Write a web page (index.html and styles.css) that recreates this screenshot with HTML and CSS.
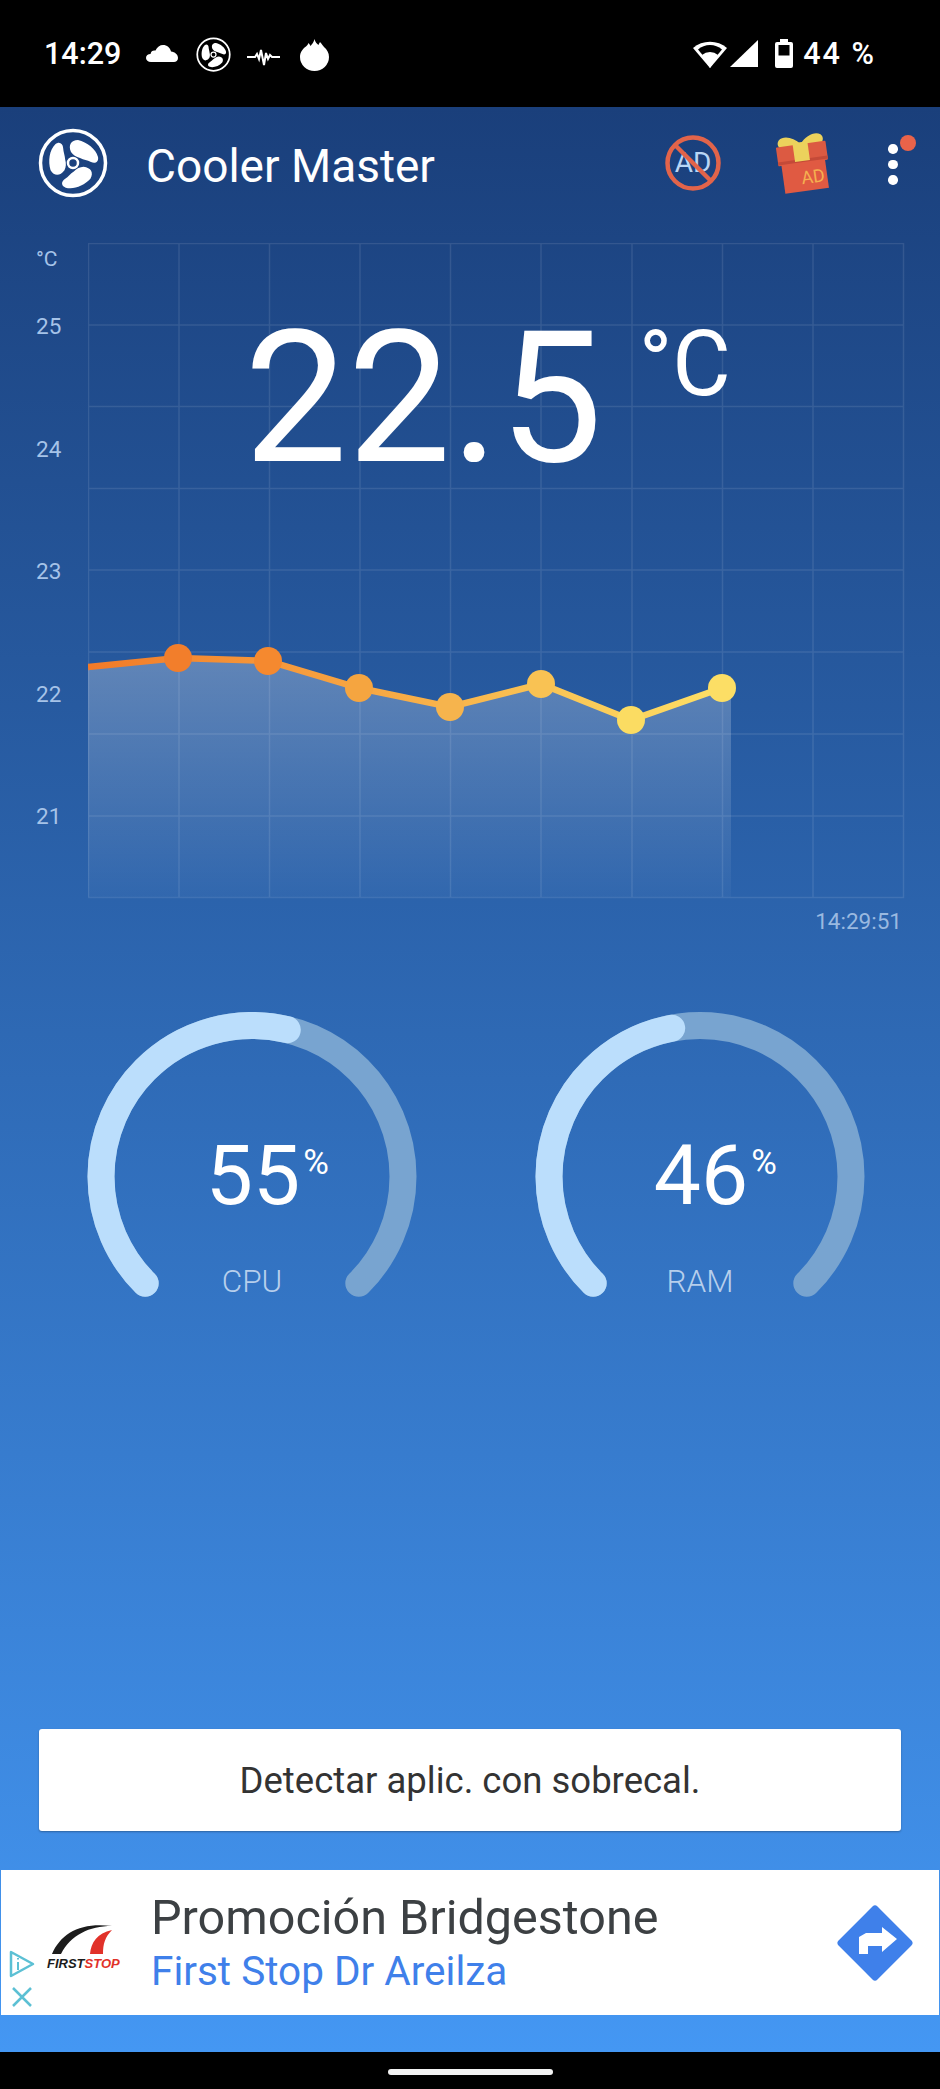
FILE: index.html
```html
<!DOCTYPE html>
<html lang="es">
<head>
  <meta charset="UTF-8" />
  <meta name="viewport" content="width=device-width, initial-scale=1" />
  <title>Cooler Master</title>
  <link rel="stylesheet" href="styles.css">
</head>
<body>
  <svg class="defs" width="0" height="0">
    <symbol id="fan" viewBox="-35 -35 70 70">
      <circle cx="0" cy="0" r="32.5" fill="none" stroke="currentColor" stroke-width="3.5"/>
      <circle cx="0" cy="0" r="5" fill="none" stroke="currentColor" stroke-width="2.5"/>
      <g fill="currentColor">
        <path d="M-2 -11C-5 -18 -2 -23 5 -23C14 -21 23 -14 25 -6C26 -1 22 1 18 -1C14 -3 11 -3 7 -5C3 -6 0 -8 -2 -11Z"/>
        <path transform="rotate(120)" d="M-2 -11C-5 -18 -2 -23 5 -23C14 -21 23 -14 25 -6C26 -1 22 1 18 -1C14 -3 11 -3 7 -5C3 -6 0 -8 -2 -11Z"/>
        <path transform="rotate(240)" d="M-2 -11C-5 -18 -2 -23 5 -23C14 -21 23 -14 25 -6C26 -1 22 1 18 -1C14 -3 11 -3 7 -5C3 -6 0 -8 -2 -11Z"/>
      </g>
    </symbol>
    <linearGradient id="lineGrad" gradientUnits="userSpaceOnUse" x1="0" y1="0" x2="634" y2="0">
      <stop offset="0" stop-color="#f27a28"/>
      <stop offset="1" stop-color="#fde066"/>
    </linearGradient>
    <linearGradient id="areaGrad" x1="0" y1="0" x2="0" y2="1">
      <stop offset="0" stop-color="#fff" stop-opacity="0.27"/>
      <stop offset="1" stop-color="#fff" stop-opacity="0.03"/>
    </linearGradient>
  </svg>

  <div class="screen">
    <div class="status-bar">
      <div class="status-left">
        <span class="clock">14:29</span>
        <svg class="ic-cloud" width="32" height="17" viewBox="0 0 32 17"><path d="M5 17C2 17 0 15 0 13C0 10.5 2 9 4.5 9C5 6 7 5 9.5 5.5C11 2 14 0 17 0C21 0 24 2.5 25 6.5C29 7 32 9.5 32 13C32 15.5 30 17 28 17Z" fill="#fff"/></svg>
        <svg class="ic-fan" width="35" height="35"><use href="#fan"/></svg>
        <svg class="ic-pulse" width="33" height="18" viewBox="0 0 33 18"><path d="M0 9H8L10 6L12 11L14 2L17 17L19 5L21 11L23 7L25 9H33" fill="none" stroke="#fff" stroke-width="2"/></svg>
        <svg class="ic-flame" width="29" height="32" viewBox="0 0 29 32"><path d="M14.5 0C15 3 17 5 18.5 6C19 4.5 19.5 4 20 3C22 5 23 7 24 8C27 10.5 29 14 29 18A14.5 14 0 0 1 0 18C0 13 3 9.5 6 7.5C7 6.5 8 5.5 8.5 4C9.5 5 10 6 10.5 7C12 5 14 3 14.5 0Z" fill="#fff"/></svg>
      </div>
      <div class="status-right">
        <svg class="ic-wifi" width="34" height="28" viewBox="0 0 34 28">
          <path d="M17 28L0 8A26 26 0 0 1 34 8Z" fill="#fff"/>
          <path d="M17 24L5 9.5A18 18 0 0 1 29 9.5Z" fill="#000"/>
          <path d="M17 28L9 15A12 12 0 0 1 25 15Z" fill="#fff"/>
        </svg>
        <svg class="ic-signal" width="28" height="27" viewBox="0 0 28 27"><path d="M28 0V27H0Z" fill="#fff"/></svg>
        <svg class="ic-battery" width="18" height="29" viewBox="0 0 18 29">
          <path d="M5 0H13V3H16Q18 3 18 5V27Q18 29 16 29H2Q0 29 0 27V5Q0 3 2 3H5Z" fill="#fff"/>
          <rect x="3.5" y="6" width="11" height="10.5" fill="#000"/>
        </svg>
        <span class="battery-text">44 %</span>
      </div>
    </div>

    <div class="app">
      <header class="app-header">
        <svg class="logo" width="70" height="70"><use href="#fan"/></svg>
        <h1 class="app-title">Cooler Master</h1>
        <div class="no-ad">
          <svg width="56" height="56" viewBox="0 0 56 56">
            <circle cx="28" cy="28" r="25.5" fill="none" stroke="#e2644a" stroke-width="4.5"/>
          </svg>
          <span class="no-ad-text">AD</span>
          <svg class="no-ad-slash" width="56" height="56" viewBox="0 0 56 56">
            <path d="M10 10L46 46" stroke="#e2644a" stroke-width="4.5"/>
          </svg>
        </div>
        <svg class="gift" width="58" height="66" viewBox="0 0 58 66">
          <g transform="rotate(-8 27 32)">
            <path d="M27 15C21 7 11 4 6 8C2 12 5 18 12 19H42C49 18 52 12 48 8C43 4 33 7 27 15Z" fill="#ecd25c"/>
            <rect x="2" y="15" width="50" height="19" rx="1" fill="#dc5a42"/>
            <rect x="5" y="32" width="44" height="30" fill="#e05a42"/>
            <rect x="2" y="30" width="50" height="3" fill="#c44a38"/>
            <rect x="19" y="13" width="15" height="19" fill="#ecd25c"/>
            <text class="gift-ad" x="23" y="55">AD</text>
          </g>
        </svg>
        <div class="menu">
          <span class="menu-dot"></span>
          <span class="menu-dot"></span>
          <span class="menu-dot"></span>
          <span class="menu-badge"></span>
        </div>
      </header>

      <section class="chart">
        <div class="chart-row">
          <div class="y-axis">
            <span class="y-label y-unit">°C</span>
            <span class="y-label">25</span>
            <span class="y-label">24</span>
            <span class="y-label">23</span>
            <span class="y-label">22</span>
            <span class="y-label">21</span>
          </div>
          <div class="plot">
            <svg width="817" height="656" viewBox="0 0 817 656">
              <path class="grid" d="M0.5 0V655M91 0V655M181.5 0V655M272 0V655M362.5 0V655M453 0V655M544 0V655M634.5 0V655M725 0V655M815.5 0V655M0 0.5H816M0 82H816M0 163.5H816M0 245.5H816M0 327H816M0 409H816M0 491H816M0 573H816M0 654.5H816"/>
              <path d="M0 424L90 415L180 418L271 445L362 464L453 441L543 477L634 445L643 441V654H0Z" fill="url(#areaGrad)"/>
              <path class="temp-line" d="M0 424L90 415L180 418L271 445L362 464L453 441L543 477L634 445"/>
              <circle cx="90" cy="415" r="14" fill="#f27e2b"/>
              <circle cx="180" cy="418" r="14" fill="#f5892f"/>
              <circle cx="271" cy="445" r="14" fill="#f5a540"/>
              <circle cx="362" cy="464" r="14" fill="#f6b44d"/>
              <circle cx="453" cy="441" r="14" fill="#f9c253"/>
              <circle cx="543" cy="477" r="14" fill="#fbdc62"/>
              <circle cx="634" cy="445" r="14" fill="#fcde65"/>
            </svg>
            <div class="temp-now">22.5<span class="temp-unit">°C</span></div>
          </div>
        </div>
        <div class="chart-time">14:29:51</div>
      </section>

      <section class="gauges">
        <div class="gauge">
          <svg width="330" height="300" viewBox="0 0 330 300">
            <path class="gauge-track" d="M58.2 271.3A151 151 0 1 1 271.8 271.3"/>
            <path class="gauge-fill" pathLength="100" stroke-dasharray="55 200" d="M58.2 271.3A151 151 0 1 1 271.8 271.3"/>
          </svg>
          <div class="gauge-value"><span class="gauge-num">55<span class="gauge-pct">%</span></span></div>
          <div class="gauge-label">CPU</div>
        </div>
        <div class="gauge">
          <svg width="330" height="300" viewBox="0 0 330 300">
            <path class="gauge-track" d="M58.2 271.3A151 151 0 1 1 271.8 271.3"/>
            <path class="gauge-fill" pathLength="100" stroke-dasharray="46 200" d="M58.2 271.3A151 151 0 1 1 271.8 271.3"/>
          </svg>
          <div class="gauge-value"><span class="gauge-num">46<span class="gauge-pct">%</span></span></div>
          <div class="gauge-label">RAM</div>
        </div>
      </section>

      <button class="detect-btn" type="button">Detectar aplic. con sobrecal.</button>

      <div class="ad">
        <svg class="ad-choices" width="26" height="58" viewBox="0 0 26 58">
          <path d="M2 2V26L24 14Z" fill="none" stroke="#5cc0d4" stroke-width="2.5" stroke-linejoin="round"/>
          <path d="M9 12V20M9 8V9.5" stroke="#5cc0d4" stroke-width="2"/>
          <path d="M4 38L22 56M22 38L4 56" stroke="#5cc0d4" stroke-width="2.5"/>
        </svg>
        <div class="ad-logo">
          <svg width="72" height="36" viewBox="0 0 72 36">
            <path d="M5 35C14 14 34 3 65 7C42 7 24 16 14 35Z" fill="#1c1c1c"/>
            <path d="M43 35C44 24 50 14 65 11C58 18 56 25 56 35Z" fill="#e1322a"/>
          </svg>
          <div class="ad-logo-text">FIRST<span class="ad-logo-red">STOP</span></div>
        </div>
        <div class="ad-text">
          <div class="ad-title">Promoción Bridgestone</div>
          <div class="ad-sub">First Stop Dr Areilza</div>
        </div>
        <svg class="ad-go" width="80" height="80" viewBox="0 0 80 80">
          <rect x="12.5" y="12.5" width="55" height="55" rx="3.5" transform="rotate(45 40 40)" fill="#3f80ea"/>
          <path d="M24 51H33V43H47V49L62 36L47 24V30H31L24 34Z" fill="#fff"/>
        </svg>
      </div>
    </div>

    <div class="nav-bar"><span class="home-pill"></span></div>
  </div>
</body>
</html>
```

FILE: styles.css
```css
* {
  box-sizing: border-box;
}
body {
  margin: 0;
  font-family: Roboto, "Liberation Sans", sans-serif;
  background: #000;
}
.defs {
  position: absolute;
}
.screen {
  width: 940px;
  height: 2089px;
  display: flex;
  flex-direction: column;
  overflow: hidden;
}

/* status bar */
.status-bar {
  height: 107px;
  flex: none;
  background: #000;
  color: #fff;
  display: flex;
  justify-content: space-between;
  padding: 37px 66px 0 44px;
}
.status-left,
.status-right {
  display: flex;
  align-items: flex-start;
}
.clock {
  font-size: 30.5px;
  font-weight: 500;
  line-height: 34px;
  width: 102px;
}
.ic-cloud {
  margin-top: 8px;
}
.ic-fan {
  margin: 0 0 0 18px;
}
.ic-pulse {
  margin: 11px 0 0 16px;
}
.ic-flame {
  margin: 2px 0 0 20px;
}
.ic-wifi {
  margin-top: 3px;
}
.ic-signal {
  margin: 3px 0 0 3px;
}
.ic-battery {
  margin: 2px 0 0 17px;
}
.battery-text {
  font-size: 30.5px;
  font-weight: 500;
  line-height: 34px;
  letter-spacing: 2px;
  margin-left: 10px;
  margin-right: -2px;
  white-space: nowrap;
}

/* app */
.app {
  flex: 1;
  display: flex;
  flex-direction: column;
  background: linear-gradient(180deg, #1a3f7b 0%, #4497f3 100%);
  padding-bottom: 37px;
}
.app-header {
  height: 136px;
  flex: none;
  display: flex;
  align-items: flex-start;
  position: relative;
  color: #fff;
  padding: 21px 0 0 38px;
}
.logo {
  flex: none;
}
.app-title {
  margin: 8px 0 0 38px;
  width: 519px;
  font-size: 46px;
  font-weight: 400;
  line-height: 60px;
  white-space: nowrap;
}
.no-ad {
  position: relative;
  width: 56px;
  height: 56px;
  margin-top: 7px;
}
.no-ad svg {
  display: block;
}
.no-ad-text {
  position: absolute;
  inset: 0;
  text-align: center;
  line-height: 56px;
  font-size: 28px;
  color: #b9d6f5;
}
.no-ad-slash {
  position: absolute;
  top: 0;
  left: 0;
}
.gift {
  margin: 1px 0 0 55px;
  flex: none;
}
.gift-ad {
  font-size: 18px;
  fill: #f5b050;
}
.menu {
  position: relative;
  width: 10px;
  margin: 16px 0 0 54px;
  display: flex;
  flex-direction: column;
  gap: 6px;
}
.menu-dot {
  width: 9.5px;
  height: 9.5px;
  border-radius: 50%;
  background: #fff;
}
.menu-badge {
  position: absolute;
  top: -9px;
  left: 12px;
  width: 16px;
  height: 16px;
  border-radius: 50%;
  background: #e9634a;
}

/* chart */
.chart {
  flex: none;
}
.chart-row {
  display: flex;
}
.y-axis {
  width: 88px;
  padding-left: 36px;
  display: flex;
  flex-direction: column;
  gap: 90.6px;
}
.y-label {
  height: 32px;
  line-height: 32px;
  font-size: 22.5px;
  color: #a6c3e8;
}
.y-unit {
  font-size: 21px;
  margin-bottom: -55.6px;
}
.plot {
  position: relative;
  width: 817px;
  height: 656px;
}
.plot svg {
  display: block;
}
.grid {
  fill: none;
  stroke: #fff;
  stroke-opacity: 0.1;
  stroke-width: 1.5;
}
.temp-line {
  fill: none;
  stroke: url(#lineGrad);
  stroke-width: 6.5;
}
.temp-now {
  position: absolute;
  top: 47px;
  left: 156px;
  font-size: 184px;
  font-weight: 400;
  line-height: 216px;
  color: #fff;
  white-space: nowrap;
}
.temp-unit {
  position: absolute;
  top: 23px;
  left: 100%;
  margin-left: 36px;
  font-size: 90px;
  line-height: 104px;
}
.chart-time {
  height: 44px;
  padding-right: 38px;
  text-align: right;
  font-size: 22.5px;
  line-height: 44px;
  color: #9ab9e0;
}

/* gauges */
.gauges {
  flex: none;
  display: flex;
  gap: 118px;
  margin-top: 69px;
  padding-left: 87px;
}
.gauge {
  position: relative;
  width: 330px;
  height: 300px;
}
.gauge svg {
  display: block;
}
.gauge-track,
.gauge-fill {
  fill: none;
  stroke-width: 27;
  stroke-linecap: round;
}
.gauge-track {
  stroke: #78a4d0;
}
.gauge-fill {
  stroke: #bbdefc;
}
.gauge-value {
  position: absolute;
  top: 117px;
  left: 2px;
  right: 0;
  text-align: center;
  color: #fff;
}
.gauge-num {
  position: relative;
  font-size: 84px;
  line-height: 94px;
}
.gauge-pct {
  position: absolute;
  top: -10px;
  left: 100%;
  margin-left: 3px;
  font-size: 35px;
}
.gauge-label {
  position: absolute;
  top: 252px;
  left: 0;
  right: 0;
  text-align: center;
  font-size: 31.5px;
  font-weight: 300;
  line-height: 36px;
  color: #b7cfec;
}

/* button + ad */
.detect-btn {
  flex: none;
  display: block;
  margin: auto 39px 0;
  height: 102px;
  border: none;
  border-radius: 3px;
  background: #fff;
  box-shadow: 0 1px 2px rgba(0, 0, 0, 0.3);
  font-family: inherit;
  font-size: 36.5px;
  color: #333;
}
.ad {
  flex: none;
  position: relative;
  height: 145px;
  margin: 39px 1px 0;
  background: #fff;
  display: flex;
  align-items: center;
  padding-left: 46px;
}
.ad-choices {
  position: absolute;
  left: 8px;
  bottom: 7px;
}
.ad-logo {
  flex: none;
  width: 72px;
  margin-top: 7px;
}
.ad-logo svg {
  display: block;
}
.ad-logo-text {
  font-family: "Liberation Sans", sans-serif;
  font-size: 13px;
  font-weight: 700;
  font-style: italic;
  line-height: 18px;
  color: #1c1c1c;
  white-space: nowrap;
}
.ad-logo-red {
  color: #e1322a;
}
.ad-text {
  flex: none;
  width: 684px;
  margin-left: 32px;
}
.ad-title {
  font-size: 48.5px;
  line-height: 56px;
  color: #3c4043;
  white-space: nowrap;
}
.ad-sub {
  font-size: 40.5px;
  line-height: 50px;
  color: #3f80ea;
  white-space: nowrap;
}
.ad-go {
  flex: none;
}

.nav-bar {
  height: 37px;
  flex: none;
  background: #000;
  display: flex;
  justify-content: center;
  padding-top: 17px;
}
.home-pill {
  width: 165px;
  height: 6px;
  border-radius: 3px;
  background: #f2f2f2;
}
```
